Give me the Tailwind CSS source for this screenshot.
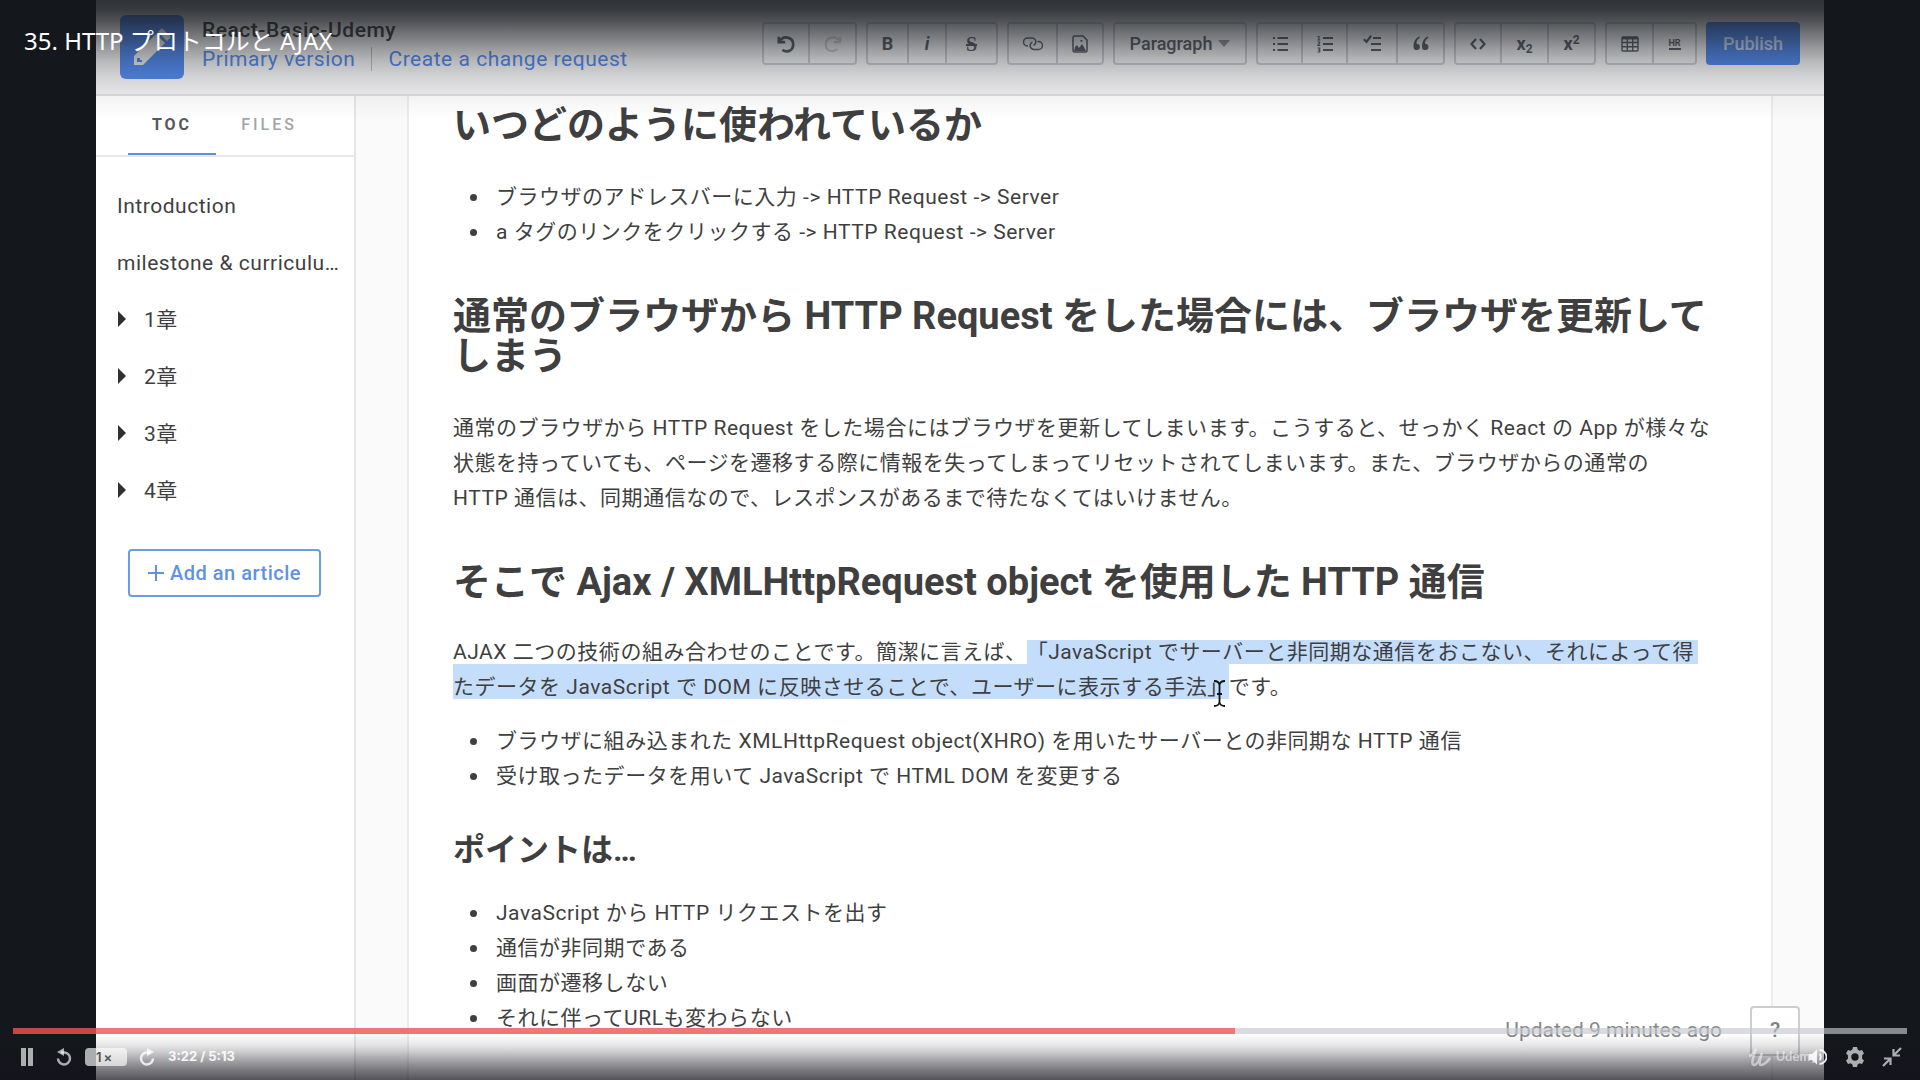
<!DOCTYPE html>
<html lang="ja">
<head>
<meta charset="utf-8">
<meta name="viewport" content="width=device-width, initial-scale=1">
<title>35. HTTP プロトコルと AJAX</title>
<script src="https://cdn.jsdelivr.net/npm/@tailwindcss/browser@4"></script>
</head>
<body class="bg-[#14171c] font-['Roboto','Noto_Sans_CJK_JP',sans-serif] text-[#3f3f3f]">
<div class="relative flex h-screen flex-col overflow-hidden">

  <!-- Recorded editor window -->
  <div class="mx-[5%] flex min-h-0 flex-1 flex-col overflow-hidden bg-white">
    <header class="flex h-24 shrink-0 items-start border-b-2 border-[#dedede] bg-[#f1f1f2] px-6 pt-[15px]">
      <a href="#" aria-label="Space home" class="flex h-16 w-16 shrink-0 items-center justify-center rounded-md bg-[#5288ea]">
        <svg viewBox="0 0 40 40" class="h-10 w-10" fill="#e9e9e9"><path fill-rule="evenodd" d="M2 38v-9L24 7l9 9L11 38zM5 31v4h5v-2H8v-2zM26 5l3-3q1-1 2 0l7 7q1 1 0 2l-3 3z"/></svg>
      </a>
      <div class="ml-[18px] text-[21px] whitespace-nowrap">
        <h1 class="leading-[30px] font-medium tracking-wide">React-Basic-Udemy</h1>
        <nav class="flex items-center leading-7 tracking-wide text-[#5288ea]"><a href="#">Primary version</a><span class="mx-4 h-6 w-px bg-[#b9b9be]"></span><a href="#">Create a change request</a></nav>
      </div>
      <div class="mt-[7px] ml-auto flex gap-[9px] text-lg leading-5 font-medium text-[#5a6069]">
        <div class="flex h-[43px] divide-x-2 divide-[#c6cad1] rounded border-2 border-[#c6cad1]">
          <button aria-label="Undo" class="flex w-[46px] items-center justify-center"><svg viewBox="0 0 20 20" class="size-[18px]" fill="none" stroke="currentColor" stroke-width="3"><path d="M2 2v6h7"/><path d="M3 7C7 0 18 2 18 10.500c0 8-8 9-12 6"/></svg></button>
          <button aria-label="Redo" class="flex w-[45px] items-center justify-center opacity-25"><svg viewBox="0 0 20 20" class="size-[18px]" fill="none" stroke="currentColor" stroke-width="2.500"><path d="M18 2v6h-7"/><path d="M17 7C13 0 2 2 2 10.500c0 8 9 9 13 5"/></svg></button>
        </div>
        <div class="flex h-[43px] divide-x-2 divide-[#c6cad1] rounded border-2 border-[#c6cad1]">
          <button aria-label="Bold" class="w-[41px] font-bold">B</button>
          <button aria-label="Italic" class="w-[38px] font-bold italic">i</button>
          <button aria-label="Strikethrough" class="w-[49px] font-['Liberation_Serif',serif] text-xl font-bold line-through">S</button>
        </div>
        <div class="flex h-[43px] divide-x-2 divide-[#c6cad1] rounded border-2 border-[#c6cad1]">
          <button aria-label="Link" class="flex w-[49px] items-center justify-center"><svg viewBox="0 0 20 16" class="h-4 w-5" fill="none" stroke="currentColor" stroke-width="1.500"><path d="M5 10H4.500a3.700 3.700 0 0 1 0-8H9a3.800 3.800 0 0 1 3.500 5.200 3.500 3.500 0 0 1-2 2"/><path d="M14.500 5.500h1a4 4 0 0 1 0 8h-4.500a3.900 3.900 0 0 1-3.600-5.300 3.500 3.500 0 0 1 2-2"/></svg></button>
          <button aria-label="Image" class="flex w-[44px] items-center justify-center"><svg viewBox="0 0 16 18" class="h-[18px] w-4" fill="none" stroke="currentColor" stroke-width="1.500"><path d="M1 15.500V2.500Q1 1 2.500 1H11l4 4v10.500q0 1.500-1.500 1.500h-11Q1 17 1 15.500z"/><path fill="currentColor" stroke="none" d="M2 16l1-4 2-2 2 3 3-4 2 3 2 4zM8.500 5h1.800v1.800H8.500z"/></svg></button>
        </div>
        <button class="flex h-[43px] w-[134px] items-center justify-center gap-1.5 rounded border-2 border-[#c6cad1]">Paragraph<svg viewBox="0 0 12 7" class="h-[7px] w-3" fill="#93969c"><path d="M0 0h12L6 7z"/></svg></button>
        <div class="flex h-[43px] divide-x-2 divide-[#c6cad1] rounded border-2 border-[#c6cad1]">
          <button aria-label="Bulleted list" class="flex w-[45px] items-center justify-center"><svg viewBox="0 0 16 16" class="size-4" fill="none" stroke="currentColor" stroke-width="2.200"><path d="M5.500 2H16M5.500 8H16M5.500 14H16M1 2h2M1 8h2M1 14h2"/></svg></button>
          <button aria-label="Numbered list" class="flex w-[45px] items-center justify-center"><svg viewBox="0 0 16 18" class="h-[18px] w-4" fill="none" stroke="currentColor"><path stroke-width="2.200" d="M6 3h10M6 9h10M6 15h10"/><path stroke-width="1.200" d="M.5 1.500H2V5M.3 5h3M.5 7h2v1.500L.8 10.500h2.500M.5 13h2.200v4H.5M1 15h1.700"/></svg></button>
          <button aria-label="Task list" class="flex w-[50px] items-center justify-center"><svg viewBox="0 0 18 18" class="size-[18px]" fill="none" stroke="currentColor" stroke-width="2.200"><path d="M10 3h8M8 9h10M8 15h10M.8 4.200l2.700 2.600L8.200.8"/></svg></button>
          <button aria-label="Quote" class="flex w-[45px] items-center justify-center"><svg viewBox="0 0 16 16" class="size-4" fill="currentColor"><path d="M6.500.5C3 1.500.5 5 .5 11a3.200 3.200 0 1 0 3-3.300C3.500 5 4.500 3 7 1.800zM15 .5C11.500 1.500 9 5 9 11a3.200 3.200 0 1 0 3-3.300c0-2.700 1-4.700 3.500-5.900z"/></svg></button>
        </div>
        <div class="flex h-[43px] divide-x-2 divide-[#c6cad1] rounded border-2 border-[#c6cad1]">
          <button aria-label="Code" class="flex w-[46px] items-center justify-center"><svg viewBox="0 0 16 12" class="h-3 w-4" fill="none" stroke="currentColor" stroke-width="2.200"><path d="M6 1L1.500 6 6 11M10 1l4.500 5L10 11"/></svg></button>
          <button aria-label="Subscript" class="w-[47px] font-bold">x<sub class="text-xs">2</sub></button>
          <button aria-label="Superscript" class="w-[45px] font-bold">x<sup class="text-xs">2</sup></button>
        </div>
        <div class="flex h-[43px] divide-x-2 divide-[#c6cad1] rounded border-2 border-[#c6cad1]">
          <button aria-label="Table" class="flex w-[47px] items-center justify-center"><svg viewBox="0 0 18 16" class="h-4 w-[18px]" fill="none" stroke="currentColor" stroke-width="1.400"><rect x="1" y="1" width="16" height="14" rx="1"/><path d="M1 6.500h16M1 10.700h16M6.300 3v12M11.700 3v12"/><path stroke-width="2.500" d="M1 2.200h16"/></svg></button>
          <button aria-label="Horizontal rule" class="flex w-[41px] flex-col items-center justify-center"><span class="text-[9px] leading-[10px] font-bold">HR</span><span class="h-0.5 w-3 bg-current"></span></button>
        </div>
        <button class="h-[43px] w-[94px] rounded bg-[#5288ea] text-white/75">Publish</button>
      </div>
    </header>

    <div class="flex min-h-0 flex-1">
      <aside class="w-[260px] shrink-0 border-r-2 border-[#e6e6e6]">
        <div class="flex h-[61px] border-b-2 border-[#e9e9e9] px-8 text-base tracking-[3px]">
          <button class="relative w-[88px] pb-0.5 font-bold text-[#55585c]">TOC<span class="absolute inset-x-0 bottom-0 h-0.5 bg-[#5f90e2]"></span></button>
          <button class="w-[106px] pb-0.5 font-medium text-[#a3a5a9]">FILES</button>
        </div>
        <nav class="flex flex-col px-[21px] pt-[21px] text-[21px] leading-[57px] tracking-wide whitespace-nowrap">
          <a href="#">Introduction</a>
          <a href="#">milestone &amp; curriculu…</a>
          <a href="#" class="flex items-center gap-[18px] pl-px"><svg viewBox="0 0 8 16" class="mb-1 h-4 w-2" fill="#303030"><path d="M0 0l8 8-8 8z"/></svg>1章</a>
          <a href="#" class="flex items-center gap-[18px] pl-px"><svg viewBox="0 0 8 16" class="mb-1 h-4 w-2" fill="#303030"><path d="M0 0l8 8-8 8z"/></svg>2章</a>
          <a href="#" class="flex items-center gap-[18px] pl-px"><svg viewBox="0 0 8 16" class="mb-1 h-4 w-2" fill="#303030"><path d="M0 0l8 8-8 8z"/></svg>3章</a>
          <a href="#" class="flex items-center gap-[18px] pl-px"><svg viewBox="0 0 8 16" class="mb-1 h-4 w-2" fill="#303030"><path d="M0 0l8 8-8 8z"/></svg>4章</a>
        </nav>
        <button class="mx-8 mt-[29px] flex h-12 w-[193px] items-center justify-center gap-1.5 rounded border-2 border-[#6e9be6] text-[20px] font-medium tracking-wide text-[#5f92e6]"><svg viewBox="0 0 16 16" class="size-4" stroke="currentColor" stroke-width="2"><path d="M8 0v16M0 8h16"/></svg>Add an article</button>
      </aside>

      <main class="relative min-w-0 flex-1 overflow-hidden bg-[#fafafa] px-[51px]">
        <article class="min-h-full border-x-2 border-[#ececf0] bg-white px-11 pt-[9px] text-[21px] leading-[35px] tracking-wide [text-spacing-trim:space-all]">
          <h2 class="text-[38px] leading-10 font-bold tracking-normal">いつどのように使われているか</h2>
          <ul class="mt-[35px] pl-[43px]">
            <li class="relative before:absolute before:top-[14px] before:-left-[26px] before:size-[7px] before:rounded-full before:bg-current">ブラウザのアドレスバーに入力 -&gt; HTTP Request -&gt; Server</li>
            <li class="relative before:absolute before:top-[14px] before:-left-[26px] before:size-[7px] before:rounded-full before:bg-current">a タグのリンクをクリックする -&gt; HTTP Request -&gt; Server</li>
          </ul>
          <h2 class="mt-[46px] text-[38px] leading-10 font-bold tracking-normal">通常のブラウザから HTTP Request をした場合には、ブラウザを更新してしまう</h2>
          <p class="mt-[35px]">通常のブラウザから HTTP Request をした場合にはブラウザを更新してしまいます。こうすると、せっかく React の App が様々な<br>状態を持っていても、ページを遷移する際に情報を失ってしまってリセットされてしまいます。また、ブラウザからの通常の<br>HTTP 通信は、同期通信なので、レスポンスがあるまで待たなくてはいけません。</p>
          <h2 class="mt-[46px] text-[38px] leading-10 font-bold tracking-normal">そこで Ajax / XMLHttpRequest object を使用した HTTP 通信</h2>
          <p class="mt-[33px]">AJAX 二つの技術の組み合わせのことです。簡潔に言えば、<mark class="bg-[#c4ddfb] pr-1 text-inherit">「JavaScript でサーバーと非同期な通信をおこない、それによって得</mark><br><mark class="relative bg-[#c4ddfb] pt-[11px] text-inherit">たデータを JavaScript で DOM に反映させることで、ユーザーに表示する手法」<svg viewBox="0 0 13 27" class="absolute right-[3px] -bottom-2 h-[27px] w-[13px]" fill="none" stroke="#111" stroke-width="1.800"><path d="M1 1q5 0 5.500 4Q7 1 12 1M6.500 4v19M1 26q5 0 5.500-4Q7 26 12 26M4 14h5"/></svg></mark>です。</p>
          <ul class="mt-[19px] pl-[43px]">
            <li class="relative before:absolute before:top-[14px] before:-left-[26px] before:size-[7px] before:rounded-full before:bg-current">ブラウザに組み込まれた XMLHttpRequest object(XHRO) を用いたサーバーとの非同期な HTTP 通信</li>
            <li class="relative before:absolute before:top-[14px] before:-left-[26px] before:size-[7px] before:rounded-full before:bg-current">受け取ったデータを用いて JavaScript で HTML DOM を変更する</li>
          </ul>
          <h3 class="mt-9 text-[32px] leading-10 font-bold tracking-normal">ポイントは…</h3>
          <ul class="mt-[26px] pl-[43px]">
            <li class="relative before:absolute before:top-[14px] before:-left-[26px] before:size-[7px] before:rounded-full before:bg-current">JavaScript から HTTP リクエストを出す</li>
            <li class="relative before:absolute before:top-[14px] before:-left-[26px] before:size-[7px] before:rounded-full before:bg-current">通信が非同期である</li>
            <li class="relative before:absolute before:top-[14px] before:-left-[26px] before:size-[7px] before:rounded-full before:bg-current">画面が遷移しない</li>
            <li class="relative before:absolute before:top-[14px] before:-left-[26px] before:size-[7px] before:rounded-full before:bg-current">それに伴ってURLも変わらない</li>
          </ul>
        </article>
        <div class="absolute right-6 bottom-6 flex items-center gap-7 text-[21px] text-[#85878a]">
          <span>Updated 9 minutes ago</span>
          <button aria-label="Help" class="h-[50px] w-[50px] rounded border-2 border-[#cdced4] bg-white font-medium text-[#7c7e84]">?</button>
        </div>
      </main>
    </div>
  </div>

  <!-- Player title -->
  <div class="pointer-events-none absolute inset-x-0 top-0 h-[120px] bg-[linear-gradient(to_bottom,rgba(20,23,28,0.88),rgba(20,23,28,0.83)_10px,rgba(20,23,28,0.74)_20px,rgba(20,23,28,0.62)_30px,rgba(20,23,28,0.5)_40px,rgba(20,23,28,0.38)_50px,rgba(20,23,28,0.27)_60px,rgba(20,23,28,0.19)_70px,rgba(20,23,28,0.12)_80px,rgba(20,23,28,0.05)_95px,rgba(20,23,28,0))] pt-[23px] pl-6">
    <p class="font-['Noto_Sans','Noto_Sans_CJK_JP',sans-serif] text-2xl leading-9 text-white">35. HTTP プロトコルと AJAX</p>
  </div>

  <!-- Player controls -->
  <div class="absolute inset-x-0 bottom-0">
    <div class="relative z-10 mx-[13px] flex h-1.5" role="progressbar" aria-valuenow="202" aria-valuemax="313" aria-label="Playback position">
      <div class="bg-[#ed5555]/80" style="width:64.5%"></div>
      <div class="flex-1 bg-[#c5c7ce]/65"></div>
    </div>
    <div class="flex h-[46px] items-center bg-[linear-gradient(to_bottom,rgba(20,20,28,0),rgba(20,20,28,0.1)_11px,rgba(20,20,28,0.2)_17px,rgba(20,20,28,0.38)_26px,rgba(20,20,28,0.57)_36px,rgba(20,20,28,0.73))] px-[18px] text-white/65">
      <button aria-label="Pause" class="flex w-[18px] justify-center"><svg viewBox="0 0 12 18" class="h-[18px] w-3" fill="currentColor"><path d="M0 0h5v18H0zM7 0h5v18H7z"/></svg></button>
      <button aria-label="Rewind" class="ml-5"><svg viewBox="0 0 16 18" class="h-[18px] w-4" fill="none" stroke="currentColor" stroke-width="2.500"><path d="M5 4.500h3.500a6 6 0 1 1-6.500 6"/><path fill="currentColor" stroke="none" d="M8 0v8L1 4z"/></svg></button>
      <button class="ml-[13px] h-[18px] w-[42px] rounded-sm bg-white/65 pr-1 font-['Inter',sans-serif] text-[13px] leading-[18px] font-semibold text-[#4f5258]">1<span class="ml-0.5">×</span></button>
      <button aria-label="Forward" class="ml-3 text-white/80"><svg viewBox="0 0 16 18" class="h-[18px] w-4" fill="none" stroke="currentColor" stroke-width="2.500"><path d="M11 4.500H7.500a6 6 0 1 0 6.500 6"/><path fill="currentColor" stroke="none" d="M8 0v8l7-4z"/></svg></button>
      <span class="ml-[13px] font-['Inter',sans-serif] text-[13px] font-bold text-white/90">3:22 / 5:13</span>
      <div class="ml-auto flex items-center">
        <span class="flex items-center gap-1 font-['Lato',sans-serif] text-[13px] font-bold text-white/50 drop-shadow-sm"><svg viewBox="0 0 24 20" class="h-5 w-6" fill="none" stroke="currentColor" stroke-width="2.500"><path d="M1 9q4-1 7-7Q2 18 6 18q4 0 8-12-4 12-1 12 4 0 9-7"/></svg>Udemy</span>
        <button aria-label="Volume" class="-ml-2 text-white/90"><svg viewBox="0 0 18 16" class="h-4 w-[18px]" fill="none" stroke="currentColor" stroke-width="1.800"><path fill="currentColor" stroke="none" d="M0 5h3l5-4.500v15L3 11H0z"/><path d="M10.500 5a4 4 0 0 1 0 6M10.500 1a7 7 0 0 1 0 14"/></svg></button>
        <button aria-label="Settings" class="ml-[18px]"><svg viewBox="0 0 20 20" class="size-5" fill="currentColor"><path fill-rule="evenodd" d="M8 0h4l.6 2.600 1.900 1.100L17 3l2 3.400L17.100 8.300v3.400L19 13.600 17 17l-2.500-.7-1.900 1.100L12 20H8l-.6-2.600-1.900-1.100L3 17l-2-3.400 1.900-1.900V8.300L1 6.400 3 3l2.500.7 1.900-1.100zM10 6.300a3.700 3.700 0 1 0 0 7.400 3.700 3.700 0 0 0 0-7.400z"/></svg></button>
        <button aria-label="Exit full screen" class="ml-[17px]"><svg viewBox="0 0 20 20" class="size-5" fill="none" stroke="currentColor" stroke-width="2.200"><path d="M19 1l-7 7M11.500 2v6.500H18M1 19l7-7M2 11.500h6.500V18"/></svg></button>
      </div>
    </div>
  </div>
</div>
</body>
</html>
